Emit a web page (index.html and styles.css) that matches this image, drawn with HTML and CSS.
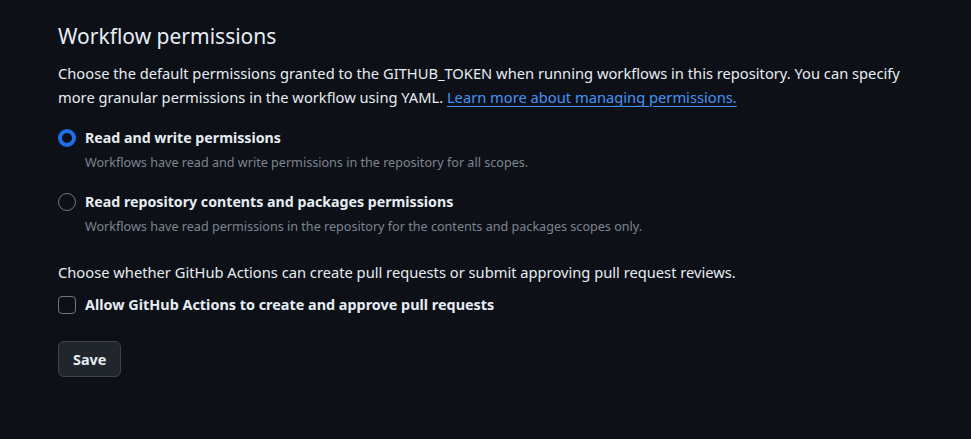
FILE: index.html
```html
<!DOCTYPE html>
<html lang="en">
<head>
<meta charset="utf-8">
<title>Workflow permissions</title>
<link rel="stylesheet" href="styles.css">
</head>
<body>
<main class="section">
  <h2 class="subhead">Workflow permissions</h2>
  <p class="lead">Choose the default permissions granted to the GITHUB_TOKEN when running workflows in this repository. You can specify more granular permissions in the workflow using YAML. <a href="#" class="link">Learn more about managing permissions.</a></p>

  <div class="option">
    <span class="radio radio-checked"></span>
    <div class="option-body">
      <div class="option-label">Read and write permissions</div>
      <div class="option-note">Workflows have read and write permissions in the repository for all scopes.</div>
    </div>
  </div>

  <div class="option">
    <span class="radio"></span>
    <div class="option-body">
      <div class="option-label">Read repository contents and packages permissions</div>
      <div class="option-note">Workflows have read permissions in the repository for the contents and packages scopes only.</div>
    </div>
  </div>

  <p class="lead lead-second">Choose whether GitHub Actions can create pull requests or submit approving pull request reviews.</p>

  <div class="option option-check">
    <span class="checkbox"></span>
    <div class="option-label">Allow GitHub Actions to create and approve pull requests</div>
  </div>

  <button class="btn" type="button">Save</button>
</main>
</body>
</html>
```

FILE: styles.css
```css
html, body {
  margin: 0;
  padding: 0;
  background: #0d1117;
}
body {
  font-family: "Noto Sans", "Open Sans", sans-serif;
  color: #e6edf3;
}
.section {
  padding: 20px 0 0 58px;
  width: 860px;
}
.subhead {
  margin: 0;
  font-size: 21px;
  font-weight: 400;
  line-height: 32px;
}
.lead {
  margin: 9px 0 0;
  font-size: 14.7px;
  line-height: 24px;
}
.lead-second {
  margin-top: 23px;
}
.link {
  color: #4493f8;
  text-decoration: underline;
  text-underline-offset: 3px;
}
.option {
  display: flex;
  gap: 9px;
  margin-top: 17px;
}
.option + .option {
  margin-top: 17px;
}
.radio {
  flex: none;
  box-sizing: border-box;
  width: 18px;
  height: 18px;
  margin-top: 3px;
  border-radius: 50%;
  border: 1px solid #6e7681;
}
.radio-checked {
  border: 4px solid #1f6feb;
}
.option-label {
  font-size: 14.2px;
  font-weight: 700;
  line-height: 24px;
}
.option-note {
  font-size: 12.6px;
  line-height: 20px;
  margin-top: 3px;
  color: #7d8590;
}
.option-check {
  margin-top: 9px;
}
.option-check .option-label {
  font-size: 14.4px;
}
.checkbox {
  flex: none;
  box-sizing: border-box;
  width: 18px;
  height: 18px;
  margin-top: 3px;
  border-radius: 4px;
  border: 1px solid #6e7681;
}
.btn {
  display: block;
  margin-top: 24px;
  height: 36px;
  padding: 0 14px;
  background: #21262d;
  border: 1px solid #3d444d;
  border-radius: 6px;
  color: #e6edf3;
  font-family: inherit;
  font-size: 14.4px;
  font-weight: 700;
}
```
